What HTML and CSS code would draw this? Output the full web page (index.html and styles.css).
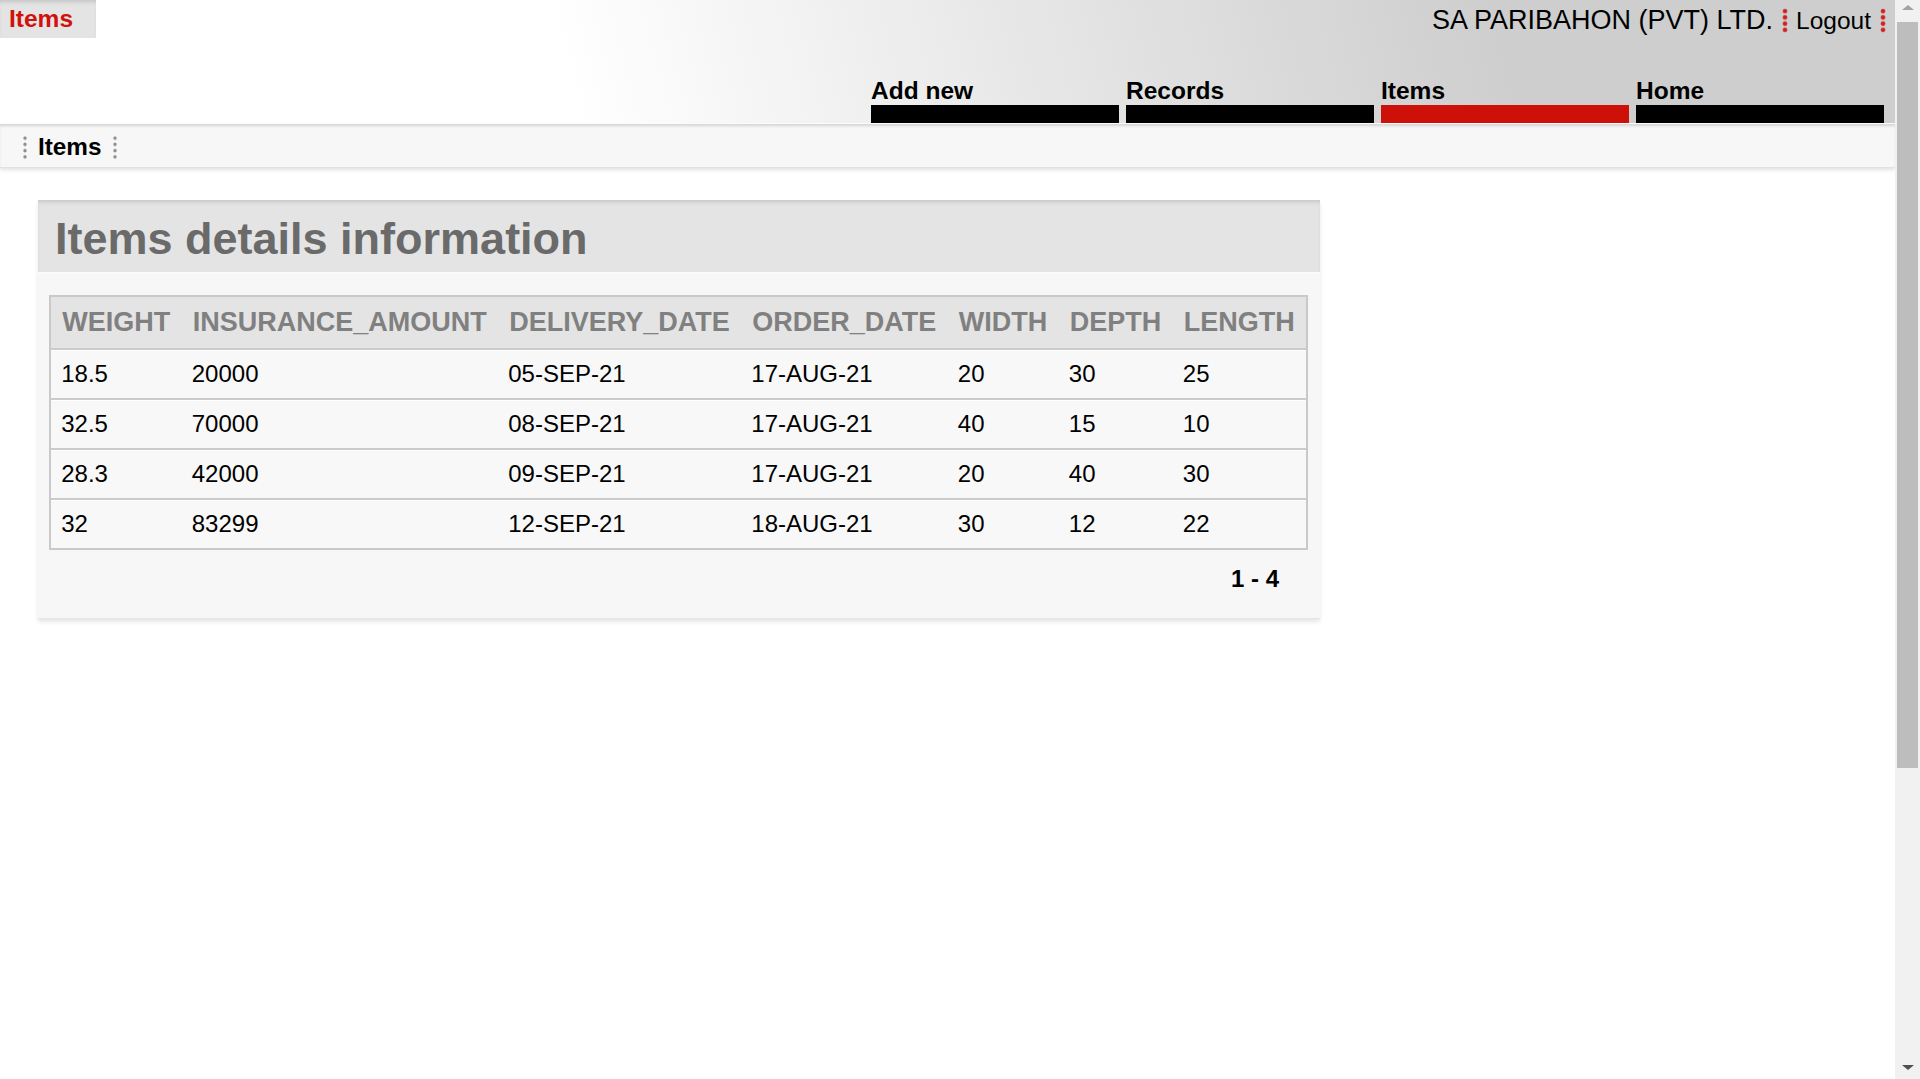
FILE: index.html
```html
<!DOCTYPE html>
<html lang="en">
<head>
<meta charset="utf-8">
<title>Items</title>
<link rel="stylesheet" href="styles.css">
</head>
<body>
<div class="page">
  <header class="masthead">
    <div class="topbar">
      <div class="app-tab">Items</div>
      <div class="user">
        <span class="company">SA PARIBAHON (PVT) LTD.</span>
        <span class="sep sep-red"></span>
        <a class="logout" href="#">Logout</a>
        <span class="sep sep-red"></span>
      </div>
    </div>
    <nav class="nav">
      <a class="nav-item" href="#"><span class="nav-label">Add new</span><span class="nav-bar"></span></a>
      <a class="nav-item" href="#"><span class="nav-label">Records</span><span class="nav-bar"></span></a>
      <a class="nav-item active" href="#"><span class="nav-label">Items</span><span class="nav-bar"></span></a>
      <a class="nav-item" href="#"><span class="nav-label">Home</span><span class="nav-bar"></span></a>
    </nav>
  </header>
  <div class="crumbs">
    <span class="sep sep-gray"></span>
    <span class="crumb">Items</span>
    <span class="sep sep-gray"></span>
  </div>
  <main class="content">
    <section class="panel">
      <h1 class="panel-title">Items details information</h1>
      <div class="panel-body">
        <table class="grid">
          <thead>
            <tr><th>WEIGHT</th><th>INSURANCE_AMOUNT</th><th>DELIVERY_DATE</th><th>ORDER_DATE</th><th>WIDTH</th><th>DEPTH</th><th>LENGTH</th></tr>
          </thead>
          <tbody>
            <tr><td>18.5</td><td>20000</td><td>05-SEP-21</td><td>17-AUG-21</td><td>20</td><td>30</td><td>25</td></tr>
            <tr><td>32.5</td><td>70000</td><td>08-SEP-21</td><td>17-AUG-21</td><td>40</td><td>15</td><td>10</td></tr>
            <tr><td>28.3</td><td>42000</td><td>09-SEP-21</td><td>17-AUG-21</td><td>20</td><td>40</td><td>30</td></tr>
            <tr><td>32</td><td>83299</td><td>12-SEP-21</td><td>18-AUG-21</td><td>30</td><td>12</td><td>22</td></tr>
          </tbody>
        </table>
        <div class="pager">1 - 4</div>
      </div>
    </section>
  </main>
</div>
<div class="scrollbar" aria-hidden="true">
  <div class="sb-btn sb-up"><span class="sb-arrow-up"></span></div>
  <div class="sb-thumb"></div>
  <div class="sb-track"></div>
  <div class="sb-btn sb-down"><span class="sb-arrow-down"></span></div>
</div>
</body>
</html>
```
FILE: styles.css
```css
html {
  background: #ffffff;
}
body {
  margin: 0;
  display: flex;
  height: 100vh;
  overflow: hidden;
  font-family: "Liberation Sans", Arial, sans-serif;
  color: #000;
  background: #ffffff;
}
.page {
  flex: 1;
  min-width: 0;
}

/* ---------- window scrollbar ---------- */
.scrollbar {
  flex: none;
  width: 25px;
  display: flex;
  flex-direction: column;
  align-items: center;
  background: #f1f1f1;
}
.sb-btn {
  flex: none;
  height: 22px;
  width: 100%;
  display: flex;
  justify-content: center;
}
.sb-up {
  align-items: flex-start;
  padding-top: 5px;
  box-sizing: border-box;
}
.sb-down {
  align-items: flex-end;
  padding-bottom: 9px;
  box-sizing: border-box;
}
.sb-arrow-up {
  width: 0;
  height: 0;
  border-left: 6px solid transparent;
  border-right: 6px solid transparent;
  border-bottom: 5px solid #a3a3a3;
}
.sb-arrow-down {
  width: 0;
  height: 0;
  border-left: 6px solid transparent;
  border-right: 6px solid transparent;
  border-top: 5px solid #505050;
}
.sb-thumb {
  flex: none;
  width: 21px;
  height: 746px;
  background: #bdbdbd;
}
.sb-track {
  flex: 1;
}

/* ---------- masthead ---------- */
.masthead {
  height: 123px;
  background: linear-gradient(75deg, #ffffff 30%, #cecece 79%);
}
.topbar {
  display: flex;
  justify-content: space-between;
  align-items: flex-start;
  height: 38px;
}
.app-tab {
  width: 96px;
  height: 38px;
  box-sizing: border-box;
  padding-left: 9px;
  background: #e4e4e4;
  box-shadow: inset 0 4px 4px -2px #c4c4c4;
  color: #d0110c;
  font-weight: bold;
  font-size: 24.5px;
  line-height: 38px;
}
.user {
  display: flex;
  align-items: baseline;
  padding: 5px 9px 0 0;
}
.company {
  font-size: 27px;
  line-height: 30px;
}
.logout {
  font-size: 24.5px;
  line-height: 30px;
  color: #000;
  text-decoration: none;
}
.sep {
  display: block;
  align-self: center;
  flex: none;
  height: 25px;
  background-repeat: repeat-y;
}
.sep-red {
  width: 6px;
  margin: 0 8px 0 9px;
  background-image: radial-gradient(circle at 50% 50%, #d91a1a 1.4px, rgba(190, 20, 20, 0.55) 2.2px, transparent 2.8px);
  background-size: 6px 6.25px;
}
.user .sep-red:last-child {
  margin-right: 0;
}
.sep-gray {
  width: 4px;
  background-image: radial-gradient(circle at 50% 50%, #8d8d8d 1px, rgba(140, 140, 140, 0.45) 1.7px, transparent 2.2px);
  background-size: 4px 6.25px;
}

.nav {
  display: flex;
  justify-content: flex-end;
  gap: 7px;
  margin-top: 39px;
  padding-right: 11px;
}
.nav-item {
  display: flex;
  flex-direction: column;
  width: 248px;
  color: #000;
  text-decoration: none;
}
.nav-label {
  font-size: 24.5px;
  font-weight: bold;
  line-height: 28px;
  height: 28px;
  white-space: nowrap;
}
.nav-bar {
  display: block;
  height: 18px;
  background: #000;
}
.nav-item.active .nav-bar {
  background: #cd1008;
}

/* ---------- breadcrumb ---------- */
.crumbs {
  display: flex;
  align-items: center;
  height: 44px;
  box-sizing: border-box;
  margin-top: 1px;
  padding: 3px 0 0 23px;
  background: #f7f7f7;
  border-bottom: 1px solid #e2e2e2;
  box-shadow: inset 0 3px 3px -1px #d4d4d4, 0 2px 4px rgba(0, 0, 0, 0.12);
}
.crumb {
  margin: 0 12px 0 11px;
  font-size: 24.3px;
  font-weight: bold;
}

/* ---------- content panel ---------- */
.content {
  padding: 32px 0 0 38px;
}
.panel {
  width: 1282px;
  box-shadow: 0 3px 4px rgba(0, 0, 0, 0.10);
}
.panel-title {
  margin: 0;
  height: 74px;
  box-sizing: border-box;
  padding: 6px 0 0 17px;
  background: #e4e4e4;
  box-shadow: inset 0 4px 4px -2px #c6c6c6;
  border-bottom: 2px solid #fbfbfb;
  color: #6a6a6a;
  font-size: 45px;
  font-weight: bold;
  line-height: 66px;
  white-space: nowrap;
}
.panel-body {
  padding: 21px 0 25px 11px;
  background: #f7f7f7;
  border-bottom: 1px solid #e6e6e6;
}

.grid {
  border-collapse: separate;
  border-spacing: 0;
  border: 2px solid #c9c9c9;
}
.grid th {
  height: 51px;
  padding: 0 11.25px;
  background: #e4e4e4;
  color: #808080;
  font-size: 27px;
  font-weight: bold;
  text-align: left;
  white-space: nowrap;
}
.grid td {
  height: 48px;
  padding: 0 11px 0 10.25px;
  border-top: 2px solid #cbcbcb;
  box-shadow: inset 0 1px #ffffff;
  background: #f8f8f8;
  font-size: 24px;
  white-space: nowrap;
}

.pager {
  margin-top: 15px;
  padding-right: 41px;
  text-align: right;
  font-size: 24px;
  font-weight: bold;
}
```
